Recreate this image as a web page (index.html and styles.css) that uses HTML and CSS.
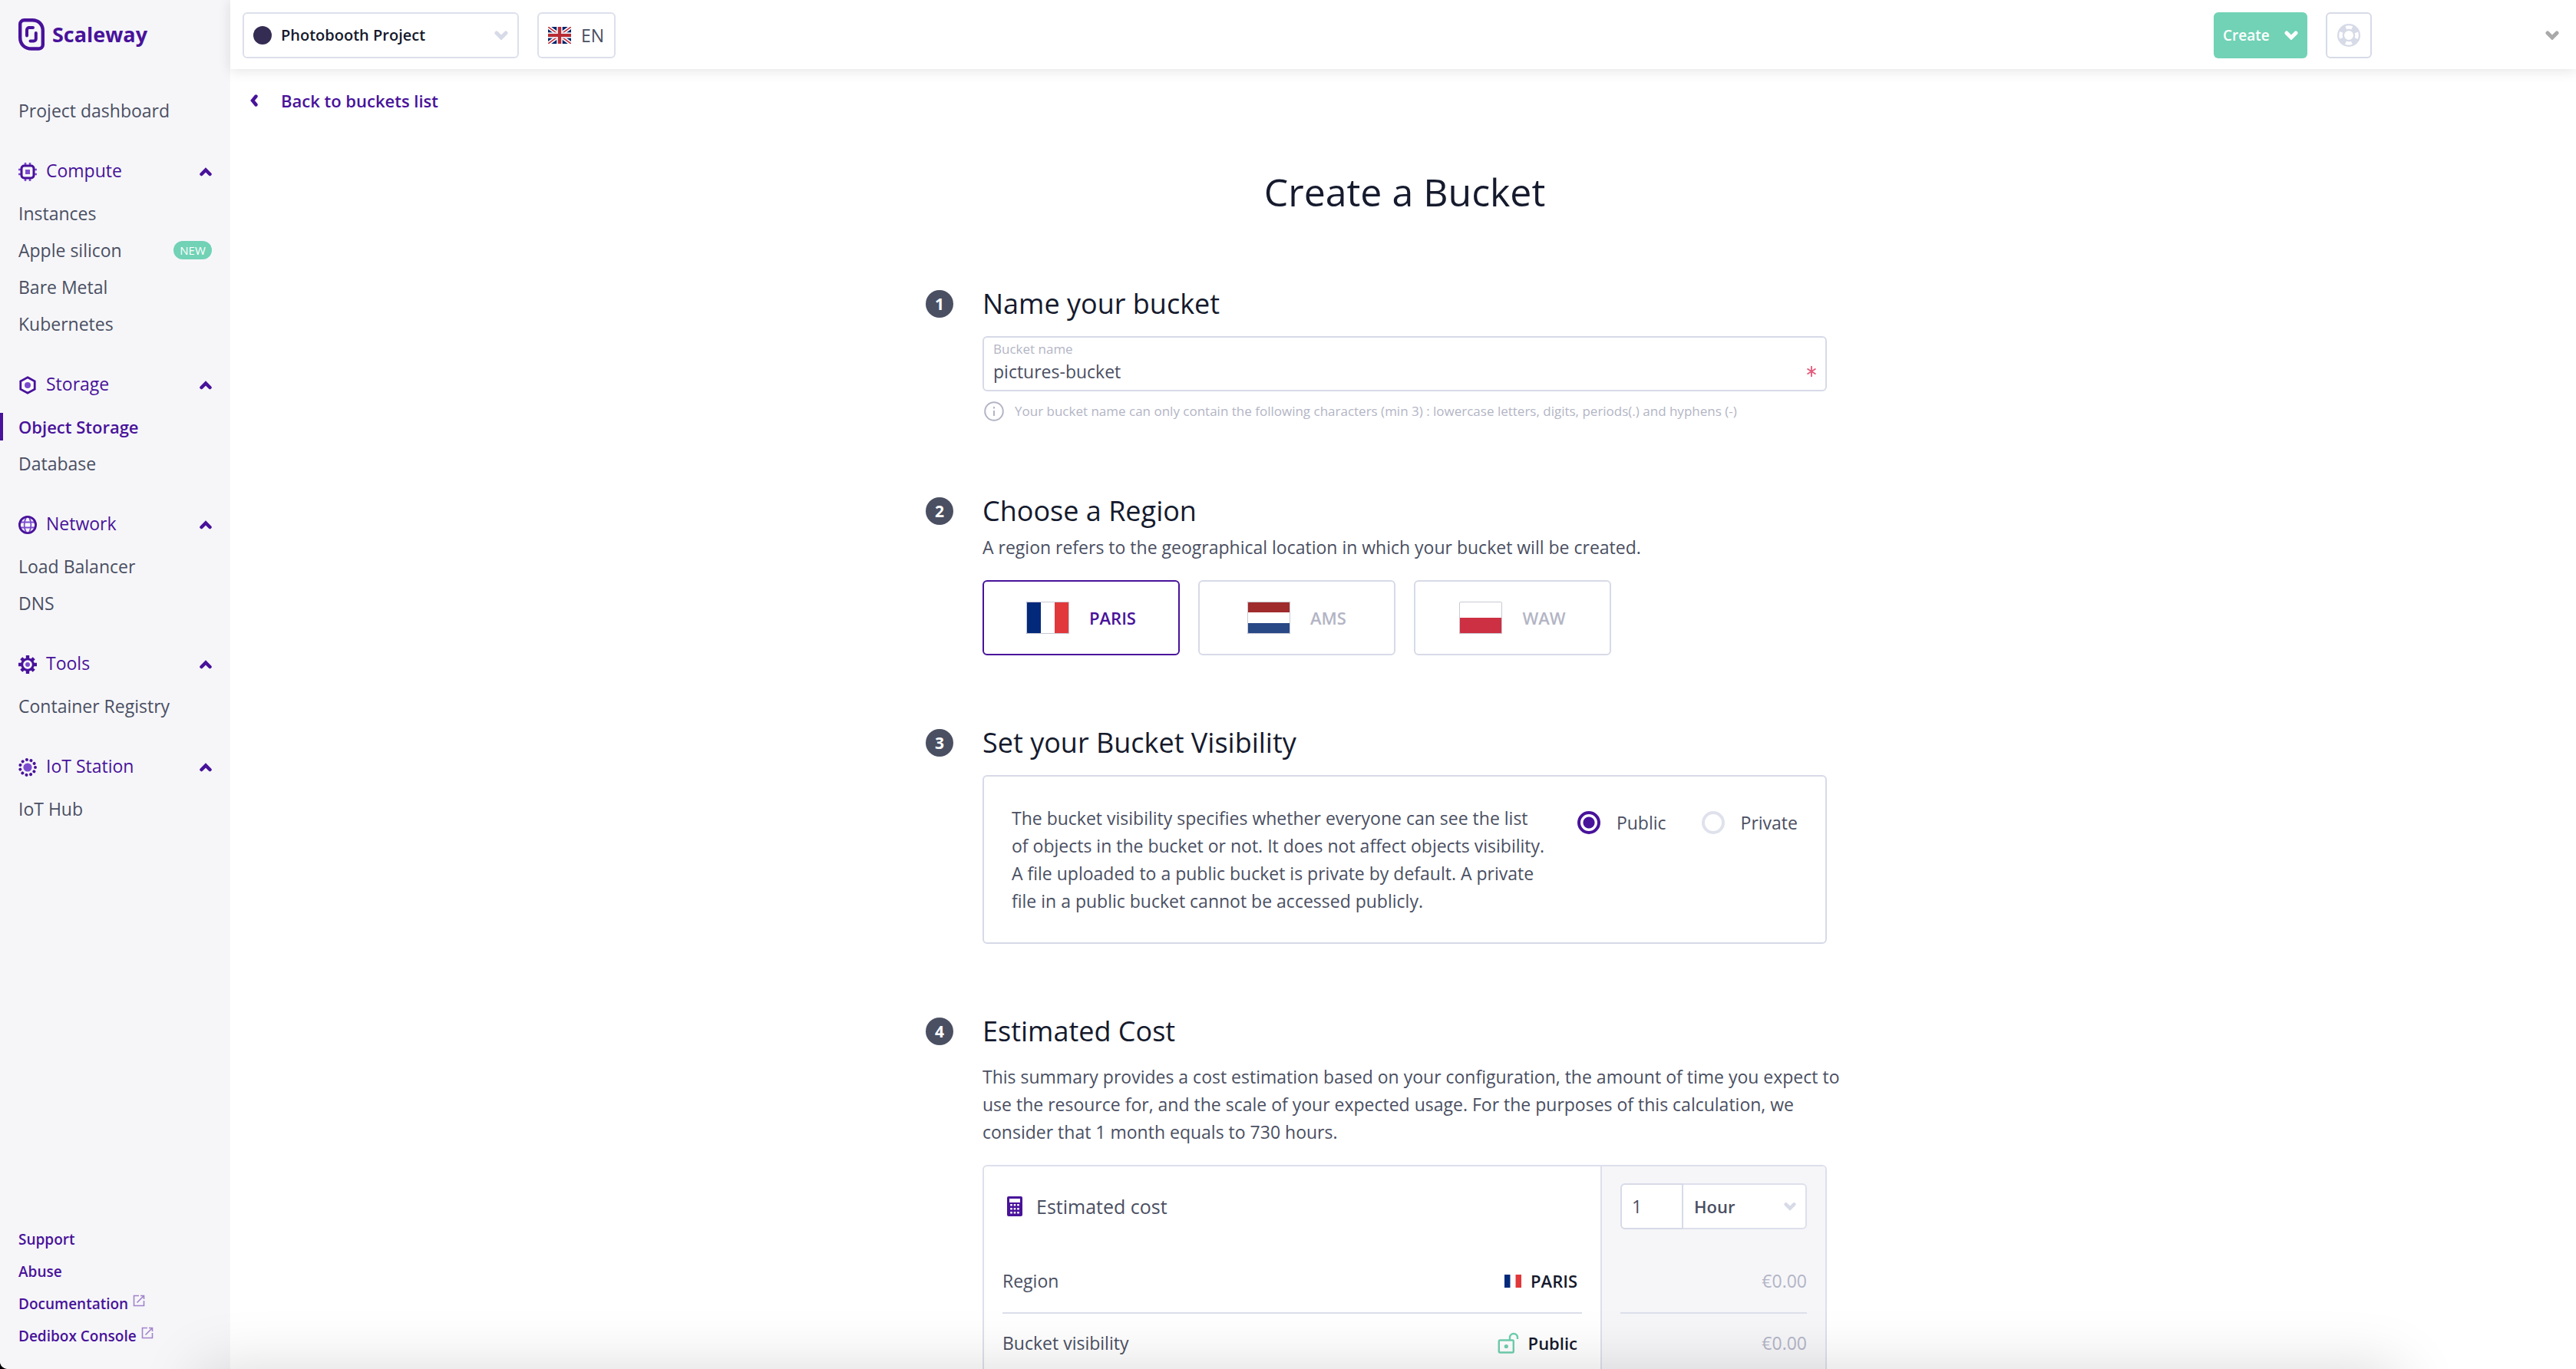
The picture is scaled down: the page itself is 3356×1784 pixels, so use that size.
FILE: index.html
```html
<!DOCTYPE html>
<html lang="en">
<head>
<meta charset="utf-8">
<title>Create a Bucket - Scaleway</title>
<link rel="stylesheet" href="styles.css">
</head>
<body>
<svg class="defs" aria-hidden="true">
  <symbol id="chev-down" viewBox="0 0 18 12"><path d="M3 3l6 6 6-6" fill="none" stroke="currentColor" stroke-width="5" stroke-linecap="round" stroke-linejoin="miter"/></symbol>
  <symbol id="chev-up" viewBox="0 0 16 12"><path d="M2.500 9L8 3.500 13.500 9" fill="none" stroke="currentColor" stroke-width="4.500" stroke-linecap="round"/></symbol>
  <symbol id="external" viewBox="0 0 16 16"><path d="M8 1.500H1.500v13h13V8M10 1.500h4.500V6M14.500 1.500L5.500 10.500" fill="none" stroke="currentColor" stroke-width="1.600"/></symbol>
  <symbol id="flag-fr" viewBox="0 0 56 42"><rect width="56" height="42" fill="#fff"/><rect width="19" height="42" fill="#03297b"/><rect x="37" width="19" height="42" fill="#e1383c"/></symbol>
</svg>
<div class="shell">
  <aside class="sidebar">
    <a class="logo" href="#">
      <svg width="34" height="42" viewBox="0 0 34 42" fill="none" stroke="currentColor"><path d="M7.500 2.200H18C26.500 2.200 31.800 8 31.800 16V34.500a5 5 0 0 1-5 5H17C8 39.500 2.200 33.500 2.200 25V7.500a5.300 5.300 0 0 1 5.300-5.300z" stroke-width="4.400"/><path d="M11 22.500V15a3 3 0 0 1 3-3h5M22.800 19v7.500a3 3 0 0 1-3 3H15.500" stroke-width="4" stroke-linecap="round"/></svg>
      <span>Scaleway</span>
    </a>
    <nav class="nav">
      <a class="item" href="#">Project dashboard</a>
      <section>
        <button class="group" type="button"><svg width="24" height="24" viewBox="0 0 24 24"><path d="M9 0v24M15 0v24M0 9h24M0 15h24" stroke="#7c4ccf" stroke-width="2.600"/><rect x="4" y="4" width="16" height="16" rx="3.500" fill="#f6f6f9" stroke="#48129a" stroke-width="3"/><rect x="9" y="9" width="6" height="6" fill="#7c4ccf"/></svg><span>Compute</span><svg class="chev" width="16" height="12"><use href="#chev-up"/></svg></button>
        <a class="item" href="#">Instances</a>
        <a class="item" href="#">Apple silicon <span class="badge">NEW</span></a>
        <a class="item" href="#">Bare Metal</a>
        <a class="item" href="#">Kubernetes</a>
      </section>
      <section>
        <button class="group" type="button"><svg width="24" height="24" viewBox="0 0 24 24"><path d="M12 1.800l9.200 5v10.400l-9.200 5-9.200-5V6.800z" fill="#fff" stroke="#48129a" stroke-width="2.800"/><circle cx="12" cy="12" r="4" fill="#7c4ccf"/></svg><span>Storage</span><svg class="chev" width="16" height="12"><use href="#chev-up"/></svg></button>
        <a class="item active" href="#" aria-current="page">Object Storage</a>
        <a class="item" href="#">Database</a>
      </section>
      <section>
        <button class="group" type="button"><svg width="24" height="24" viewBox="0 0 24 24" fill="none"><path d="M2 8.500h20M2 15.500h20M10 2c-3 6-3 14 0 20M14 2c3 6 3 14 0 20" stroke="#7c4ccf" stroke-width="2"/><circle cx="12" cy="12" r="10.600" stroke="#48129a" stroke-width="2.800"/></svg><span>Network</span><svg class="chev" width="16" height="12"><use href="#chev-up"/></svg></button>
        <a class="item" href="#">Load Balancer</a>
        <a class="item" href="#">DNS</a>
      </section>
      <section>
        <button class="group" type="button"><svg width="24" height="24" viewBox="0 0 24 24" fill="none"><g stroke="#48129a" stroke-width="4.400"><path d="M12 0v5M12 19v5M0 12h5M19 12h5M3.800 3.800l3 3M17.200 17.200l3 3M3.800 20.200l3-3M17.200 6.800l3-3"/></g><circle cx="12" cy="12" r="7.300" fill="#fff" stroke="#48129a" stroke-width="3"/><circle cx="12" cy="12" r="3" fill="#7c4ccf"/></svg><span>Tools</span><svg class="chev" width="16" height="12"><use href="#chev-up"/></svg></button>
        <a class="item" href="#">Container Registry</a>
      </section>
      <section>
        <button class="group" type="button"><svg width="24" height="24" viewBox="0 0 24 24" fill="none"><circle cx="12" cy="12" r="10" stroke="#48129a" stroke-width="4" stroke-linecap="round" stroke-dasharray="0.010 5.702"/><circle cx="12" cy="12" r="5.600" fill="#7c4ccf"/></svg><span>IoT Station</span><svg class="chev" width="16" height="12"><use href="#chev-up"/></svg></button>
        <a class="item" href="#">IoT Hub</a>
      </section>
    </nav>
    <footer class="links">
      <a href="#">Support</a>
      <a href="#">Abuse</a>
      <a href="#">Documentation <svg width="16" height="16"><use href="#external"/></svg></a>
      <a href="#">Dedibox Console <svg width="16" height="16"><use href="#external"/></svg></a>
    </footer>
  </aside>

  <div class="page">
    <header class="topbar">
      <div class="project">
        <span class="dot"></span>
        <select aria-label="Project"><option>Photobooth Project</option></select>
        <svg class="pale" width="18" height="12"><use href="#chev-down"/></svg>
      </div>
      <button class="lang" type="button">
        <svg width="30" height="22" viewBox="0 0 30 22"><rect width="30" height="22" fill="#02246b"/><path d="M0 0l30 22M30 0L0 22" stroke="#fff" stroke-width="5"/><path d="M0 0l30 22M30 0L0 22" stroke="#c4303c" stroke-width="1.600"/><path d="M15 0v22M0 11h30" stroke="#e9e9ee" stroke-width="7.600"/><path d="M15 0v22M0 11h30" stroke="#b92a34" stroke-width="4.200"/></svg>
        EN
      </button>
      <button class="create" type="button">Create <svg width="18" height="12"><use href="#chev-down"/></svg></button>
      <button class="help" type="button" aria-label="Help"><svg width="30" height="30" viewBox="0 0 30 30" fill="none"><circle cx="15" cy="15" r="10.500" stroke="#d7dae7" stroke-width="9"/><circle cx="15" cy="15" r="10.500" stroke="#fff" stroke-width="4.500" stroke-dasharray="8.200 8.293" stroke-dashoffset="4.100"/></svg></button>
      <button class="account" type="button" aria-label="Account"><svg width="18" height="12"><use href="#chev-down"/></svg></button>
    </header>

    <main class="content">
      <a class="back" href="#"><svg width="10" height="16" viewBox="0 0 10 16"><path d="M7.500 2.500L3 8l4.500 5.500" fill="none" stroke="currentColor" stroke-width="4.400" stroke-linecap="round"/></svg>Back to buckets list</a>
      <form class="form">
        <h1>Create a Bucket</h1>

        <section class="step">
          <span class="num">1</span>
          <h2>Name your bucket</h2>
          <div class="body">
            <div class="field">
              <label for="bucket">Bucket name</label>
              <div class="field-row">
                <input id="bucket" type="text" value="pictures-bucket" required>
                <svg width="12" height="14" viewBox="0 0 12 14"><path d="M6 0v14M.5 3.500l11 7M11.500 3.500l-11 7" stroke="#e5597a" stroke-width="1.800"/></svg>
              </div>
            </div>
            <p class="hint"><svg width="26" height="26" viewBox="0 0 26 26" fill="none" stroke="#b3b5c5" stroke-width="2"><circle cx="13" cy="13" r="11.800"/><path d="M13 12v7M13 7v2.500"/></svg>Your bucket name can only contain the following characters (min 3) : lowercase letters, digits, periods(.) and hyphens (-)</p>
          </div>
        </section>

        <section class="step">
          <span class="num">2</span>
          <h2>Choose a Region</h2>
          <div class="body">
            <p class="lead">A region refers to the geographical location in which your bucket will be created.</p>
            <div class="regions">
              <label class="region"><input type="radio" name="region" checked><svg class="flag" width="56" height="42"><use href="#flag-fr"/></svg>PARIS</label>
              <label class="region"><input type="radio" name="region"><svg class="flag" width="56" height="42" viewBox="0 0 56 42"><rect width="56" height="42" fill="#fff"/><rect width="56" height="14" fill="#a02b2d"/><rect y="28" width="56" height="14" fill="#284886"/></svg>AMS</label>
              <label class="region"><input type="radio" name="region"><svg class="flag" width="56" height="42" viewBox="0 0 56 42"><rect width="56" height="42" fill="#fff"/><rect y="21" width="56" height="21" fill="#cc3042"/></svg>WAW</label>
            </div>
          </div>
        </section>

        <section class="step">
          <span class="num">3</span>
          <h2>Set your Bucket Visibility</h2>
          <div class="body">
            <div class="visibility">
              <p>The bucket visibility specifies whether everyone can see the list of objects in the bucket or not. It does not affect objects visibility. A file uploaded to a public bucket is private by default. A private file in a public bucket cannot be accessed publicly.</p>
              <div class="options">
                <label><input type="radio" name="vis" checked>Public</label>
                <label><input type="radio" name="vis">Private</label>
              </div>
            </div>
          </div>
        </section>

        <section class="step">
          <span class="num">4</span>
          <h2>Estimated Cost</h2>
          <div class="body">
            <p class="summary">This summary provides a cost estimation based on your configuration, the amount of time you expect to use the resource for, and the scale of your expected usage. For the purposes of this calculation, we consider that 1 month equals to 730 hours.</p>
            <div class="cost">
              <table>
                <thead>
                  <tr>
                    <th class="name" colspan="2"><div class="cell heading"><svg width="20" height="26" viewBox="0 0 20 26"><rect width="20" height="26" rx="2" fill="#48129a"/><rect x="3" y="3" width="14" height="5" fill="#fff"/><path d="M5.500 10v14M10 10v14M14.500 10v14" stroke="#fff" stroke-width="2.600" stroke-dasharray="2.600 2.400"/></svg>Estimated cost</div></th>
                    <th class="price"><div class="cell duration"><input type="text" value="1" aria-label="Duration"><span class="unit"><select aria-label="Unit"><option>Hour</option></select><svg class="pale" width="16" height="12"><use href="#chev-down"/></svg></span></div></th>
                  </tr>
                </thead>
                <tbody>
                  <tr>
                    <td class="name"><div class="cell">Region</div></td>
                    <td class="value"><div class="cell"><svg width="22" height="17" viewBox="0 0 56 42" preserveAspectRatio="none"><use href="#flag-fr" width="56" height="42"/></svg>PARIS</div></td>
                    <td class="price"><div class="cell">€0.00</div></td>
                  </tr>
                  <tr>
                    <td class="name"><div class="cell">Bucket visibility</div></td>
                    <td class="value"><div class="cell"><svg width="28" height="28" viewBox="0 0 28 28" fill="none" stroke="#70cfb0" stroke-width="2.400"><rect x="1.800" y="10.500" width="19" height="16" rx="1.500"/><path d="M16 10.500V7a5 5 0 0 1 10 0v2"/><circle cx="11.300" cy="18.500" r="2.600" fill="#70cfb0" stroke="none"/></svg>Public</div></td>
                    <td class="price"><div class="cell">€0.00</div></td>
                  </tr>
                </tbody>
              </table>
            </div>
          </div>
        </section>
      </form>
    </main>
  </div>
</div>
<div class="fade"></div>
</body>
</html>
```
FILE: styles.css
```css
:root {
  --purple: #48129a;
  --text: #4a4f62;
  --dark: #151a2d;
  --line: #d7dae7;
  --soft: #f6f6f9;
  --muted: #b3b5c5;
  --green: #71d2b5;
}
* { box-sizing: border-box; }
html { background: #000; }
body {
  margin: 0;
  font: 400 23px/36px "Open Sans", sans-serif;
  color: var(--text);
}
h1, h2, p { margin: 0; font-weight: 400; }
a { color: inherit; text-decoration: none; }
button, input, select { font: inherit; color: inherit; margin: 0; padding: 0; border: 0; background: none; border-radius: 0; }
select, input { appearance: none; outline: 0; min-width: 0; }
svg { flex: none; display: block; }
.defs { position: absolute; width: 0; height: 0; }
.pale { color: var(--line); pointer-events: none; }

.shell {
  display: grid;
  grid-template-columns: 300px 1fr;
  height: 100vh;
  background: #fff;
  border-bottom-left-radius: 10px;
  overflow: hidden;
}

/* Sidebar */
.sidebar { display: flex; flex-direction: column; background: var(--soft); padding: 24px 0 22px; }
.logo { display: flex; align-items: center; gap: 10px; height: 42px; padding-left: 24px; color: var(--purple); font: 700 27px/42px "Open Sans", sans-serif; }
.nav { padding-top: 54px; }
.item { display: flex; align-items: center; justify-content: space-between; height: 48px; padding: 0 24px; }
.active { font-size: 22px; font-weight: 600; color: var(--purple); background: linear-gradient(var(--purple), var(--purple)) 0 50% / 4px 36px no-repeat; }
.group { display: flex; align-items: center; gap: 12px; width: 100%; height: 48px; margin: 30px 0 8px; padding: 0 24px; color: var(--purple); }
.group svg { margin-top: 3px; }
.chev { margin-left: auto; }
.badge { background: var(--green); color: #fff; border-radius: 12px; width: 50px; font-size: 15px; line-height: 24px; text-align: center; }
.links { display: flex; flex-direction: column; margin-top: auto; padding-left: 24px; font-size: 19px; font-weight: 600; line-height: 42px; color: var(--purple); }
.links a { display: flex; gap: 6px; }
.links svg { margin-top: 9px; color: #a283cc; }

/* Top bar */
.page { display: flex; flex-direction: column; min-width: 0; min-height: 0; }
.topbar { position: relative; display: flex; align-items: center; gap: 24px; height: 90px; flex: none; padding: 2px 22px 0 16px; background: #fff; box-shadow: 0 2px 16px rgba(21, 26, 45, .12); }
.project { display: flex; align-items: center; gap: 12px; width: 360px; height: 60px; padding: 0 12px; border: 2px solid #dde0eb; border-radius: 6px; }
.project select { flex: 1; height: 56px; font-size: 20px; font-weight: 600; color: var(--dark); }
.dot { width: 24px; height: 24px; border-radius: 50%; background: #352c53; }
.lang { display: flex; align-items: center; gap: 13px; width: 102px; height: 60px; padding-left: 12px; border: 2px solid #dde0eb; border-radius: 6px; }
.create { display: flex; align-items: center; justify-content: space-between; width: 122px; height: 60px; margin-left: auto; padding: 0 12px; border-radius: 6px; background: var(--green); color: #fff; font-size: 19px; font-weight: 600; }
.help { display: grid; place-items: center; width: 60px; height: 60px; border: 2px solid var(--line); border-radius: 6px; }
.account { display: flex; justify-content: flex-end; align-items: center; width: 220px; height: 60px; color: #a9a9a9; }

/* Form */
.content { flex: 1; min-height: 0; overflow: hidden auto; scrollbar-width: none; padding: 23px 26px; }
.back { display: flex; align-items: center; gap: 30px; width: fit-content; font-size: 22px; font-weight: 600; color: var(--purple); }
.form { display: flex; flex-direction: column; gap: 90px; max-width: 1248px; margin: 71px auto 0; }
.form h1 { padding: 0 0 2px 4px; font-size: 50px; line-height: 60px; color: var(--dark); text-align: center; }
.step { display: grid; grid-template-columns: 76px 1fr; align-items: center; padding-right: 72px; }
.num { width: 36px; height: 36px; margin-left: 2px; border-radius: 50%; background: #4a4f62; color: #fff; font-size: 21px; font-weight: 700; text-align: center; }
h2 { font-size: 36px; line-height: 48px; color: var(--dark); }
.body { grid-column: 2; }
.field { height: 72px; margin-top: 18px; padding: 3px 12px 7px; border: 2px solid var(--line); border-radius: 6px; }
.field label { display: block; font-size: 17px; line-height: 24px; color: var(--muted); }
.field-row { display: flex; align-items: center; }
.field input { flex: 1; height: 34px; }
.hint { display: flex; align-items: center; gap: 14px; margin: 12px 0 2px; padding-left: 2px; font-size: 17px; line-height: 28px; color: var(--muted); }
.lead { margin-top: 5px; }
.regions { display: grid; grid-template-columns: repeat(3, 257px); gap: 24px; margin-top: 25px; }
.region { position: relative; display: flex; align-items: center; justify-content: center; gap: 26px; height: 98px; border: 2px solid var(--line); border-radius: 6px; font-size: 22px; font-weight: 600; color: var(--muted); }
.region input { position: absolute; inset: 0; opacity: 0; }
.region:has(:checked) { border-color: var(--purple); color: var(--purple); }
.flag { outline: 1px solid #c9cad3; outline-offset: -1px; border-radius: 2px; }
.visibility { display: flex; justify-content: space-between; margin-top: 18px; padding: 36px; border: 2px solid var(--line); border-radius: 6px; }
.visibility p { max-width: 698px; }
.options { display: flex; gap: 46px; }
.options label { display: flex; gap: 21px; height: 48px; align-items: center; }
.options input { width: 30px; height: 30px; border: 4px solid #dfe2ec; border-radius: 50%; }
.options input:checked { border-color: var(--purple); background: radial-gradient(circle, var(--purple) 7px, #fff 8px); }
.summary { margin: 17px -24px 0 0; }

/* Cost table */
.cost { margin-top: 25px; border: 2px solid #dde0eb; border-radius: 6px; overflow: hidden; }
table { width: 100%; border-collapse: collapse; table-layout: fixed; }
th, td { padding: 0; font-weight: 400; text-align: left; }
.cell { display: flex; align-items: center; height: 80px; padding-bottom: 4px; }
.name .cell { margin-left: 24px; }
.value .cell { margin-right: 24px; padding-right: 6px; justify-content: flex-end; gap: 12px; font-size: 22px; font-weight: 600; color: var(--dark); }
.price { width: 292px; background: var(--soft); border-left: 2px solid #dde0eb; color: var(--muted); }
.price .cell { justify-content: flex-end; margin: 0 24px; }
tbody tr:first-child .cell { border-bottom: 2px solid #dde0eb; }
.name .heading { height: 112px; padding: 0 0 8px 6px; gap: 18px; font-size: 25px; font-weight: 500; color: var(--text); }
.price .duration { height: 112px; padding-bottom: 8px; justify-content: flex-start; color: var(--text); }
.duration input { width: 82px; height: 60px; padding-left: 13px; border: 2px solid var(--line); border-radius: 6px 0 0 6px; background: #fff; }
.unit { display: flex; align-items: center; flex: 1; height: 60px; padding: 0 12px 0 14px; border: 2px solid #dde0eb; border-left: 0; border-radius: 0 6px 6px 0; background: #fff; font-size: 22px; font-weight: 600; }
.unit select { flex: 1; height: 56px; }

/* Shade cast on the bottom edge of the window */
.fade { position: fixed; left: 260px; right: 230px; bottom: -200px; height: 200px; box-shadow: 0 0 80px rgba(0, 0, 0, .15); pointer-events: none; }
```
